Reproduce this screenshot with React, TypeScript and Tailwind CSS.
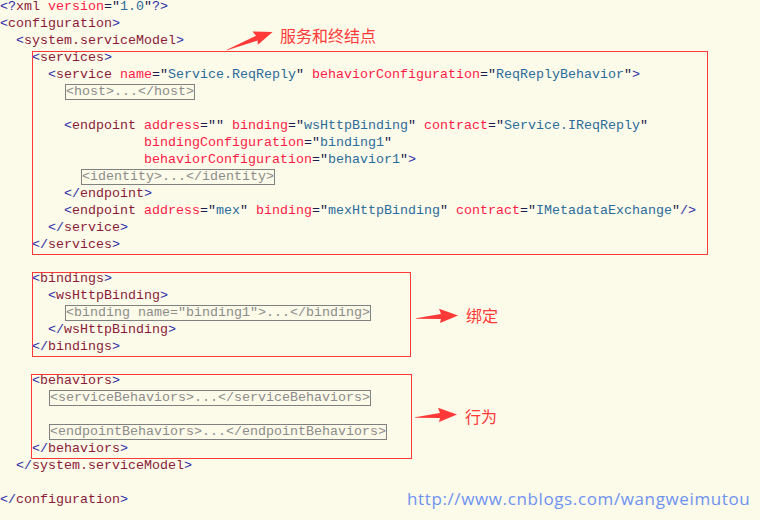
import React from "react";

type Tok = [string, string];

const K: Record<string, string> = {
  b: "text-[#2c2ca8]",
  t: "text-[#8b1a3a]",
  a: "text-[#ff1a48]",
  q: "text-[#1c1c50]",
  v: "text-[#2a6c9c]",
};

const open = (name: string, attrs: [string, string][] = [], end = ">", prefix = "<"): Tok[] => {
  const out: Tok[] = [[prefix, "b"], [name, "t"]];
  attrs.forEach(([n, v]) => {
    out.push([" ", "q"], [n, "a"], ['="', "q"], [v, "v"], ['"', "q"]);
  });
  if (end) out.push([end, "b"]);
  return out;
};
const close = (name: string): Tok[] => [["</", "b"], [name, "t"], [">", "b"]];
const attrOnly = (attrs: [string, string][], end = ""): Tok[] => {
  const out: Tok[] = [];
  attrs.forEach(([n, v], i) => {
    if (i > 0) out.push([" ", "q"]);
    out.push([n, "a"], ['="', "q"], [v, "v"], ['"', "q"]);
  });
  if (end) out.push([end, "b"]);
  return out;
};

function Code({ toks }: { toks: Tok[] }) {
  return (
    <>
      {toks.map(([s, k], i) => (
        <span key={i} className={K[k]}>
          {s}
        </span>
      ))}
    </>
  );
}

function Line({ toks, pad = "" }: { toks?: Tok[]; pad?: string }) {
  return (
    <div className={`h-[17px] leading-[13px] whitespace-pre ${pad}`}>
      {toks ? <Code toks={toks} /> : null}
    </div>
  );
}

function Fold({ text, pad = "" }: { text: string; pad?: string }) {
  return (
    <div className={`flex h-[17px] items-start ${pad}`}>
      <div className="-mt-px ml-px whitespace-pre border border-[#808080] leading-[14px] text-[#8c8c8c]">
        {text}
      </div>
    </div>
  );
}

function Arrow({ w }: { w: number }) {
  const h = w - 17;
  return (
    <svg width={w} height={16} viewBox={`0 0 ${w} 16`}>
      <polygon
        points={`0,10.3 ${h},6 ${h - 2},0.8 ${w},7.5 ${h - 1},15 ${h},11 0,10.8`}
        fill="#ff3838"
      />
    </svg>
  );
}

export default function App() {
  return (
    <div
      className="relative h-[520px] w-[760px] overflow-hidden bg-[#fcfae8] text-[13.33px]"
      style={{ fontFamily: '"Liberation Mono", "Courier New", monospace' }}
    >
      <Line toks={[["<?", "b"], ["xml", "t"], [" ", "q"], ["version", "a"], ['="', "q"], ["1.0", "v"], ['"', "q"], ["?>", "b"]]} />
      <Line toks={open("configuration")} />
      <Line pad="pl-4" toks={open("system.serviceModel")} />

      <div className="ml-8 w-[676px] shadow-[inset_0_0_0_1px_#ff3838]">
        <Line toks={open("services")} />
        <Line pad="pl-4" toks={open("service", [["name", "Service.ReqReply"], ["behaviorConfiguration", "ReqReplyBehavior"]])} />
        <Fold pad="pl-8" text="<host>...</host>" />
        <Line />
        <Line pad="pl-8" toks={open("endpoint", [["address", ""], ["binding", "wsHttpBinding"], ["contract", "Service.IReqReply"]], "")} />
        <Line pad="pl-[112px]" toks={attrOnly([["bindingConfiguration", "binding1"]])} />
        <Line pad="pl-[112px]" toks={attrOnly([["behaviorConfiguration", "behavior1"]], ">")} />
        <Fold pad="pl-12" text="<identity>...</identity>" />
        <Line pad="pl-8" toks={close("endpoint")} />
        <Line pad="pl-8" toks={open("endpoint", [["address", "mex"], ["binding", "mexHttpBinding"], ["contract", "IMetadataExchange"]], "/>")} />
        <Line pad="pl-4" toks={close("service")} />
        <Line toks={close("services")} />
      </div>
      <Line />

      <div className="ml-8 w-[379px] shadow-[inset_0_0_0_1px_#ff3838]">
        <Line toks={open("bindings")} />
        <Line pad="pl-4" toks={open("wsHttpBinding")} />
        <Fold pad="pl-8" text={'<binding name="binding1">...</binding>'} />
        <Line pad="pl-4" toks={close("wsHttpBinding")} />
        <Line toks={close("bindings")} />
      </div>
      <Line />

      <div className="ml-[31px] w-[381px] pl-px shadow-[inset_0_0_0_1px_#ff3838]">
        <Line toks={open("behaviors")} />
        <Fold pad="pl-4" text="<serviceBehaviors>...</serviceBehaviors>" />
        <Line />
        <Fold pad="pl-4" text="<endpointBehaviors>...</endpointBehaviors>" />
        <Line toks={close("behaviors")} />
      </div>
      <Line pad="pl-4" toks={close("system.serviceModel")} />
      <Line />
      <Line toks={close("configuration")} />

      {/* annotations */}
      <div className="absolute left-[225px] top-[32px] rotate-[-18deg]">
        <Arrow w={49} />
      </div>
      <div
        className="absolute left-[280px] top-[25px] text-[16px] leading-[20px] text-[#ff3838]"
        style={{ fontFamily: '"Noto Sans CJK SC", sans-serif' }}
      >
        服务和终结点
      </div>

      <div className="absolute left-[416px] top-[308px]">
        <Arrow w={42} />
      </div>
      <div
        className="absolute left-[466px] top-[305px] text-[16px] leading-[20px] text-[#ff3838]"
        style={{ fontFamily: '"Noto Sans CJK SC", sans-serif' }}
      >
        绑定
      </div>

      <div className="absolute left-[415px] top-[407px]">
        <Arrow w={42} />
      </div>
      <div
        className="absolute left-[465px] top-[406px] text-[16px] leading-[20px] text-[#ff3838]"
        style={{ fontFamily: '"Noto Sans CJK SC", sans-serif' }}
      >
        行为
      </div>

      <div
        className="absolute left-[407px] top-[488px] text-[17px] leading-[22px] tracking-[0.62px] text-[#6e92f2]"
        style={{ fontFamily: '"Open Sans", sans-serif' }}
      >
        http://www.cnblogs.com/wangweimutou
      </div>
    </div>
  );
}
